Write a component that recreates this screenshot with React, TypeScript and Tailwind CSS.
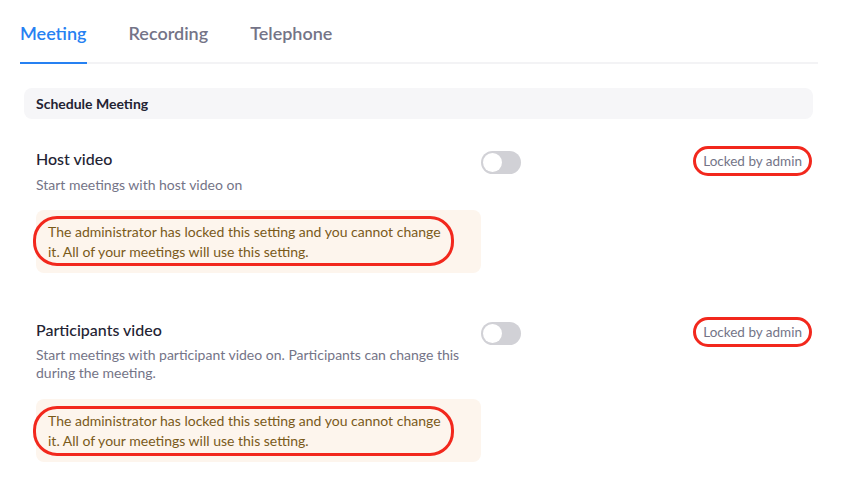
import React from "react";

function Toggle() {
  return (
    <div className="mt-[2px] h-[23px] w-[40px] shrink-0 rounded-full bg-[#d1d1d6] p-[2px]">
      <div className="h-[19px] w-[19px] rounded-full bg-white" />
    </div>
  );
}

function Locked() {
  return (
    <div className="-mt-[3px] flex h-[30px] items-center rounded-full border-[3px] border-[#f2281d] px-[7px] text-[13.5px] leading-[20px] text-[#747487]">
      Locked by admin
    </div>
  );
}

function Warning({ top, mt }: { top: string; mt: string }) {
  return (
    <div className={`relative rounded-[8px] bg-[#fdf5ed] pb-[11px] pl-[12px] pr-[30px] pt-[12px] text-[14px] leading-[20px] text-[#7a5a1a] ${mt}`}>
      The administrator has locked this setting and you cannot change it. All of your meetings will use this setting.
      <div className={`pointer-events-none absolute left-[-3px] h-[50px] w-[421px] rounded-[24px] border-[3px] border-[#f2281d] ${top}`} />
    </div>
  );
}

function Item({
  title,
  desc,
  top,
  descLead,
  mt,
}: {
  title: string;
  desc: string;
  top: string;
  descLead: string;
  mt: string;
}) {
  return (
    <div className="flex w-[776px] items-start">
      <div className="w-[445px] shrink-0">
        <div className="text-[16px] font-medium leading-[20px] text-[#232333]">{title}</div>
        <div className={`mt-[6px] text-[14px] text-[#747487] ${descLead}`}>{desc}</div>
        <Warning top={top} mt={mt} />
      </div>
      <Toggle />
      <div className="flex flex-1 justify-end">
        <Locked />
      </div>
    </div>
  );
}

export default function App() {
  return (
    <div
      className="min-h-[494px] w-[842px] bg-white pl-[20px]"
      style={{ fontFamily: "Lato, 'Open Sans', sans-serif" }}
    >
      <div className="flex w-[798px] gap-[42px] border-b-2 border-[#f3f3f5] pt-[21px] text-[18px] font-semibold leading-[24px]">
        <div className="-mb-[2px] border-b-2 border-[#2681f2] pb-[17px] text-[#2681f2]">Meeting</div>
        <div className="pb-[17px] text-[#747487]">Recording</div>
        <div className="pb-[17px] text-[#747487]">Telephone</div>
      </div>
      <div className="ml-[4px] mt-[24px] flex h-[31px] w-[789px] items-center rounded-[8px] bg-[#f6f6f8] px-[12px] text-[14px] font-bold text-[#232333]">
        Schedule Meeting
      </div>
      <div className="ml-[16px] mt-[30px] flex flex-col gap-[47px]">
        <Item
          title="Host video"
          desc="Start meetings with host video on"
          top="top-[6px]"
          descLead="leading-[20px]"
          mt="mt-[15px]"
        />
        <Item
          title="Participants video"
          desc="Start meetings with participant video on. Participants can change this during the meeting."
          top="top-[7px]"
          descLead="leading-[18px]"
          mt="mt-[17px]"
        />
      </div>
    </div>
  );
}
